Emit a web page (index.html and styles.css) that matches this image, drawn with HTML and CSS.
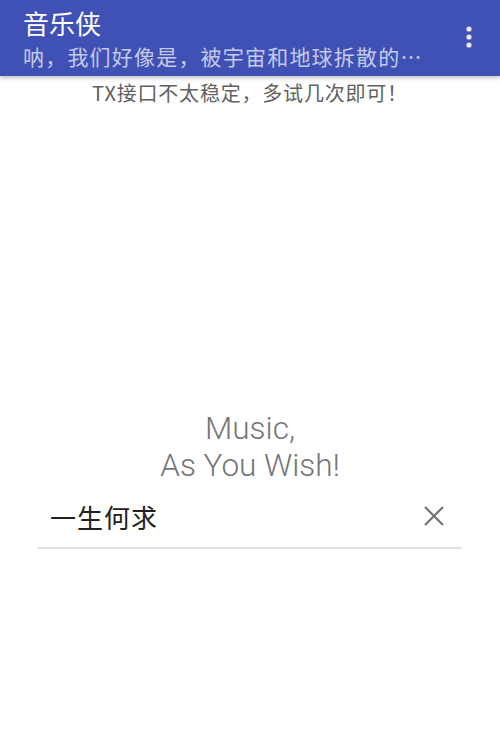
FILE: index.html
```html
<!DOCTYPE html>
<html lang="zh-CN">
<head>
    <meta charset="UTF-8">
    <meta name="viewport" content="width=device-width, initial-scale=1.0">
    <title>音乐侠</title>
    <link rel="stylesheet" href="styles.css">
</head>
<body>

    <header class="toolbar">
        <div class="toolbar-text">
            <h1 class="title">音乐侠</h1>
            <p class="subtitle">呐，我们好像是，被宇宙和地球拆散的…</p>
        </div>
        <div class="overflow">
            <svg width="8" height="24" viewBox="0 0 8 24">
                <circle cx="4" cy="4" r="2.6" fill="#e8eaf6"/>
                <circle cx="4" cy="12" r="2.6" fill="#e8eaf6"/>
                <circle cx="4" cy="20" r="2.6" fill="#e8eaf6"/>
            </svg>
        </div>
    </header>

    <div class="content">
        <p class="notice">TX接口不太稳定，多试几次即可！</p>

        <div class="hero">
            Music,<br>As You Wish!
        </div>

        <div class="search-row">
            <span class="search-text">一生何求</span>
            <svg class="clear" width="20" height="20" viewBox="0 0 20 20">
                <path d="M1 1 L19 19 M19 1 L1 19" stroke="#757575" stroke-width="2.2" fill="none"/>
            </svg>
        </div>
    </div>

</body>
</html>
```

FILE: styles.css
```css
body {
    margin: 0;
    padding: 0;
    background-color: #fff;
    font-family: "Noto Sans CJK SC", "Noto Sans", sans-serif;
}
.toolbar {
    background-color: #3f51b5;
    height: 76px;
    display: flex;
    align-items: flex-start;
    justify-content: space-between;
    padding: 0 27px 0 23px;
    box-shadow: 0 2px 4px rgba(0,0,0,0.25);
}
.title {
    margin: 4px 0 0 0;
    color: #fff;
    font-size: 26px;
    font-weight: normal;
    line-height: 38px;
}
.subtitle {
    margin: 0;
    color: #c5cae9;
    font-size: 21px;
    line-height: 28px;
    letter-spacing: 1.2px;
}
.overflow {
    padding-top: 25px;
}
.content {
    display: flex;
    flex-direction: column;
    align-items: center;
}
.notice {
    margin: 3px 0 0 0;
    color: #616161;
    font-size: 20px;
    line-height: 28px;
    letter-spacing: 0.8px;
}
.hero {
    margin-top: 303px;
    text-align: center;
    color: #757575;
    font-family: Roboto, "Noto Sans", sans-serif;
    font-weight: 300;
    font-size: 31.5px;
    line-height: 37px;
}
.search-row {
    width: 424px;
    margin-top: 13px;
    display: flex;
    align-items: center;
    justify-content: space-between;
    box-sizing: border-box;
    padding: 0 18px 12px 12px;
    height: 52px;
    border-bottom: 2px solid #e0e0e0;
}
.search-text {
    color: #212121;
    font-size: 26px;
    letter-spacing: 1px;
}
```
